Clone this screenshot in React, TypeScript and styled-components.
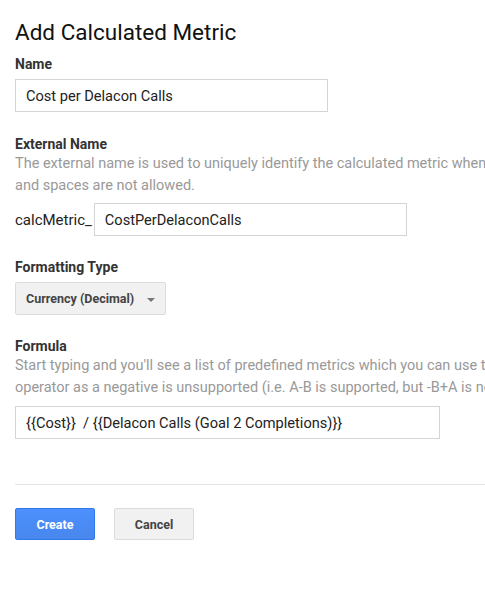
import React from "react";
import styled, { createGlobalStyle } from "styled-components";

const GlobalStyle = createGlobalStyle`
  html, body {
    margin: 0;
    padding: 0;
    background: #fff;
    overflow: hidden;
  }
  body {
    font-family: Roboto, "Liberation Sans", Arial, sans-serif;
    color: #222;
  }
`;

const Page = styled.div`
  width: 485px;
  height: 592px;
  padding: 18px 0 0 15px;
  box-sizing: border-box;
  overflow: hidden;
`;

const Title = styled.h1`
  margin: 0;
  font-size: 22.5px;
  font-weight: 400;
  line-height: 28px;
  color: #111;
`;

const Field = styled.div<{ gap?: number }>`
  margin-top: ${(p) => p.gap ?? 0}px;
`;

const Label = styled.div`
  font-size: 14px;
  font-weight: 700;
  color: #333;
  line-height: 18px;
`;

const Help = styled.div`
  font-size: 14.5px;
  line-height: 22px;
  color: #999;
  white-space: nowrap;
`;

const TextBox = styled.input<{ w: number; top?: number }>`
  display: block;
  width: ${(p) => p.w}px;
  height: 33px;
  margin-top: ${(p) => p.top ?? 0}px;
  box-sizing: border-box;
  border: 1px solid #d4d4d4;
  padding: 0 10px;
  font-family: Roboto, "Liberation Sans", Arial, sans-serif;
  font-size: 14.6px;
  color: #222;
  outline: none;
  background: #fff;
`;

const PrefixRow = styled.div`
  display: flex;
  align-items: center;
  gap: 2px;
  margin-top: 6px;
`;

const Prefix = styled.span`
  font-size: 15px;
  color: #222;
`;

const Select = styled.div`
  display: flex;
  align-items: center;
  justify-content: space-between;
  width: 151px;
  height: 33px;
  margin-top: 6px;
  box-sizing: border-box;
  padding: 0 10px;
  background: #f1f1f1;
  border: 1px solid #dcdcdc;
  border-radius: 2px;
  font-size: 12.5px;
  font-weight: 700;
  color: #444;
`;

const Caret = styled.span`
  width: 0;
  height: 0;
  border-left: 4px solid transparent;
  border-right: 4px solid transparent;
  border-top: 4px solid #777;
  margin-top: 2px;
`;

const Divider = styled.hr`
  border: 0;
  border-top: 1px solid #e5e5e5;
  margin: 45px 0 0 0;
`;

const Actions = styled.div`
  display: flex;
  gap: 19px;
  margin-top: 23px;
`;

const Button = styled.button<{ primary?: boolean }>`
  width: 80px;
  height: 32px;
  box-sizing: border-box;
  border-radius: 2px;
  font-family: Roboto, "Liberation Sans", Arial, sans-serif;
  font-size: 12.5px;
  font-weight: 700;
  cursor: pointer;
  border: 1px solid ${(p) => (p.primary ? "#3079ed" : "#dcdcdc")};
  background: ${(p) =>
    p.primary ? "linear-gradient(#4d90fe, #4787ed)" : "#f1f1f1"};
  color: ${(p) => (p.primary ? "#fff" : "#444")};
`;

export default function App() {
  return (
    <Page>
      <GlobalStyle />
      <Title>Add Calculated Metric</Title>

      <Field gap={9}>
        <Label>Name</Label>
        <TextBox w={313} top={6} defaultValue="Cost per Delacon Calls" />
      </Field>

      <Field gap={23}>
        <Label>External Name</Label>
        <Help>
          The external name is used to uniquely identify the calculated metric when
          <br />
          and spaces are not allowed.
        </Help>
        <PrefixRow>
          <Prefix>calcMetric_</Prefix>
          <TextBox w={313} defaultValue="CostPerDelaconCalls" />
        </PrefixRow>
      </Field>

      <Field gap={22}>
        <Label>Formatting Type</Label>
        <Select>
          Currency (Decimal)
          <Caret />
        </Select>
      </Field>

      <Field gap={22}>
        <Label>Formula</Label>
        <Help>
          Start typing and you'll see a list of predefined metrics which you can use to
          <br />
          operator as a negative is unsupported (i.e. A-B is supported, but -B+A is not)
        </Help>
        <TextBox
          w={425}
          top={7}
          defaultValue="{{Cost}}  / {{Delacon Calls (Goal 2 Completions)}}"
        />
      </Field>

      <Divider />

      <Actions>
        <Button primary>Create</Button>
        <Button>Cancel</Button>
      </Actions>
    </Page>
  );
}
